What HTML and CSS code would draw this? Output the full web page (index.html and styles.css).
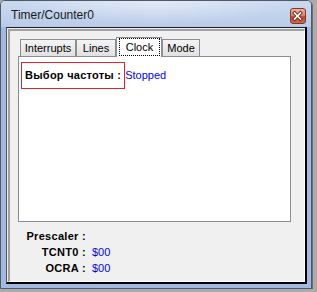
FILE: index.html
```html
<!DOCTYPE html>
<html lang="ru">
<head>
    <meta charset="UTF-8">
    <title>Timer/Counter0</title>
    <link rel="stylesheet" href="styles.css">
</head>
<body>
    <div class="window">
        <div class="titlebar">
            <span class="title">Timer/Counter0</span>
            <div class="close">
                <svg width="15" height="16" viewBox="0 0 15 16">
                    <path d="M4.5 5 L10.5 11 M10.5 5 L4.5 11" stroke="#5a2a1e" stroke-width="3.4" stroke-linecap="square"/>
                    <path d="M4.5 5 L10.5 11 M10.5 5 L4.5 11" stroke="#fff" stroke-width="1.6" stroke-linecap="square"/>
                </svg>
            </div>
        </div>

        <div class="client">
            <div class="panel">
                <div class="tabcontrol">
                    <div class="tabs">
                        <div class="tab tab-interrupts">Interrupts</div>
                        <div class="tab tab-lines">Lines</div>
                        <div class="tab tab-clock active"><span class="focus">Clock</span></div>
                        <div class="tab tab-mode">Mode</div>
                    </div>
                    <div class="page">
                        <div class="row">
                            <div class="caption">Выбор частоты :</div>
                            <span class="value">Stopped</span>
                        </div>
                    </div>
                </div>

                <div class="regs">
                    <span class="reg-name">Prescaler :</span><span class="value"></span>
                    <span class="reg-name">TCNT0 :</span><span class="value">$00</span>
                    <span class="reg-name">OCRA :</span><span class="value">$00</span>
                </div>
            </div>
        </div>
    </div>
</body>
</html>
```

FILE: styles.css
```css
body {
    margin: 0;
    background-color: #ababab;
    font-family: "Liberation Sans", Arial, sans-serif;
    font-size: 11px;
    color: #000;
}

.window {
    box-sizing: border-box;
    width: 312px;
    height: 289px;
    border: 1px solid #4f5a69;
    border-radius: 5px 5px 0 0;
    background-color: #a3b9e2;
    box-shadow: 1px 1px 0 #6f6f6f;
    display: flex;
    flex-direction: column;
}

.titlebar {
    height: 26px;
    display: flex;
    align-items: flex-start;
    padding: 0 5px 0 10px;
    border-radius: 4px 4px 0 0;
    background:
        radial-gradient(ellipse 45% 90% at 50% 0, rgba(255, 255, 255, 0.45), rgba(255, 255, 255, 0)),
        linear-gradient(#cbdaf0, #b9cbe9);
}

.title {
    flex: 1;
    padding-top: 7px;
    font-size: 12px;
    line-height: 14px;
    color: #1a1a1a;
}

.close {
    box-sizing: border-box;
    width: 16px;
    height: 16px;
    margin-top: 7px;
    border: 1px solid #7b3a2a;
    border-radius: 3px;
    background: linear-gradient(#efb09c 0%, #e2866c 45%, #c9462a 55%, #d8654a 100%);
}

.close svg {
    display: block;
    margin: -1px 0 0 -1px;
}

.client {
    flex: 1;
    display: flex;
    margin: 0 4px 4px 5px;
    padding: 1px 0 0 1px;
    border-style: solid;
    border-width: 1px 2px 2px 1px;
    border-color: #1e1e1e #000 #000 #555;
    background-color: #f0f0f0;
}

.panel {
    flex: 1;
    padding: 6px 0 0 8px;
    border-style: solid;
    border-width: 2px 1px 1px 2px;
    border-color: #a0a0a0 #fff #fff #a0a0a0;
}

/* tab control */
.tabs {
    display: flex;
    align-items: flex-end;
    height: 19px;
    padding-left: 2px;
}

.tab {
    box-sizing: border-box;
    height: 17px;
    padding-top: 2px;
    border: 1px solid #8c8e94;
    border-bottom: none;
    background: linear-gradient(#f4f4f4, #e1e1e1);
    text-align: center;
    line-height: 13px;
}

.tab-interrupts { width: 56px; }
.tab-lines { width: 40px; }
.tab-clock { width: 46px; }
.tab-mode { width: 38px; }

.tab.active {
    position: relative;
    z-index: 1;
    height: 20px;
    margin-bottom: -1px;
    padding: 0 1px 0 2px;
    background: #fff;
}

.focus {
    display: block;
    box-sizing: border-box;
    height: 18px;
    padding-top: 2px;
    border: 1px dotted #000;
}

.page {
    box-sizing: border-box;
    width: 273px;
    height: 166px;
    padding: 5px 0 0 2px;
    border: 1px solid #898c95;
    background-color: #fff;
}

.row {
    display: flex;
    align-items: baseline;
}

.caption {
    padding: 0 3px 0 3px;
    border: 1px solid #e2232b;
    font-weight: bold;
    letter-spacing: 0.25px;
    line-height: 25px;
}

.value {
    color: #0000ff;
}

/* register values under the tabs */
.regs {
    display: grid;
    grid-template-columns: 68px auto;
    column-gap: 6px;
    margin-top: 6px;
    line-height: 16px;
}

.reg-name {
    text-align: right;
    font-weight: bold;
    letter-spacing: 0.3px;
}
```
